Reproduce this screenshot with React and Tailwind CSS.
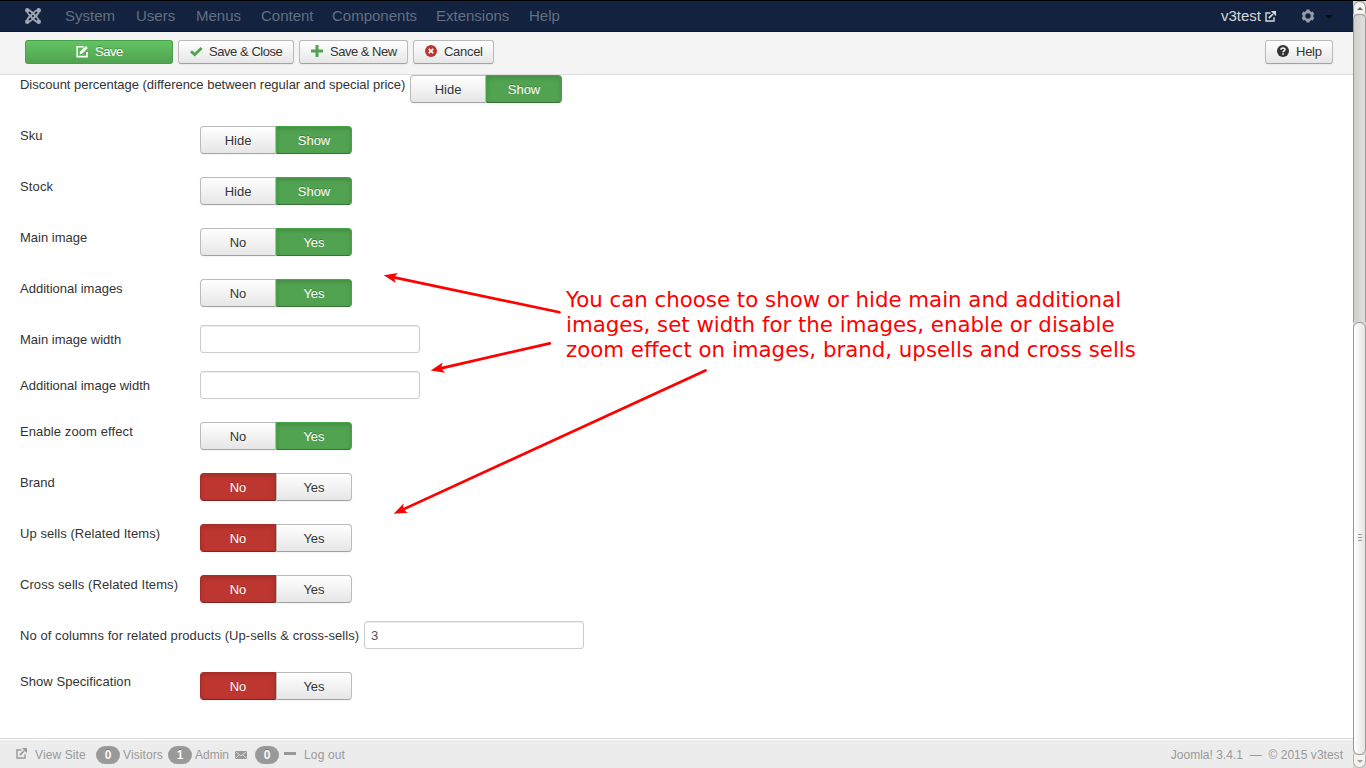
const ROWS = [
  { label: "Discount percentage (difference between regular and special price)", look: "w-[390px] tracking-[-0.015px]", type: "toggle", options: ["Hide", "Show"], active: 1 },
  { label: "Sku", type: "toggle", options: ["Hide", "Show"], active: 1 },
  { label: "Stock", look: "w-[180px] tracking-[0.15px]", type: "toggle", options: ["Hide", "Show"], active: 1 },
  { label: "Main image", type: "toggle", options: ["No", "Yes"], active: 1 },
  { label: "Additional images", type: "toggle", options: ["No", "Yes"], active: 1 },
  { label: "Main image width", type: "input", value: "" },
  { label: "Additional image width", type: "input", value: "" },
  { label: "Enable zoom effect", look: "w-[180px] tracking-[0.1px]", type: "toggle", options: ["No", "Yes"], active: 1 },
  { label: "Brand", type: "toggle", options: ["No", "Yes"], active: 0 },
  { label: "Up sells (Related Items)", look: "w-[180px] tracking-[0.06px]", type: "toggle", options: ["No", "Yes"], active: 0 },
  { label: "Cross sells (Related Items)", look: "w-[180px] tracking-[0.075px]", type: "toggle", options: ["No", "Yes"], active: 0 },
  { label: "No of columns for related products (Up-sells & cross-sells)", look: "w-[344px] tracking-[0.068px]", type: "input", value: "3" },
  { label: "Show Specification", look: "w-[180px] tracking-[0.06px]", type: "toggle", options: ["No", "Yes"], active: 0 },
];

function JoomlaIcon() {
  return (
    <svg width="16" height="16" viewBox="0 0 16 16" fill="none" className="mr-6 shrink-0 text-[#a0a7b2]">
      <g stroke="currentColor" strokeWidth="2">
        <path d="M2.500 2.500C4 2 5.200 2.500 6.300 3.600L11.600 8.900" />
        <path d="M13.500 2.500C14 4 13.500 5.200 12.400 6.300L7.100 11.600" />
        <path d="M13.500 13.500C12 14 10.800 13.500 9.700 12.400L4.400 7.100" />
        <path d="M2.500 13.500C2 12 2.500 10.800 3.600 9.700L8.900 4.400" />
      </g>
      <g stroke="currentColor" strokeWidth="1.500">
        <path d="M8.300 5C10 2.800 11.500 2 13.500 2.500M11 8.300C13.200 10 14 11.500 13.500 13.500M7.700 11C6 13.200 4.500 14 2.500 13.500M5 7.700C2.800 6 2 4.500 2.500 2.500" />
      </g>
      <g fill="currentColor">
        <circle cx="2.300" cy="2.300" r="2.300" />
        <circle cx="13.700" cy="2.300" r="2.300" />
        <circle cx="13.700" cy="13.700" r="2.300" />
        <circle cx="2.300" cy="13.700" r="2.300" />
      </g>
    </svg>
  );
}

function EditIcon() {
  return (
    <svg width="13" height="13" viewBox="0 0 13 13" fill="none" className="mb-[2px] shrink-0">
      <path d="M7.500 1.800H1.200v9.800H11V7" stroke="currentColor" strokeWidth="1.600" />
      <path d="M3.500 9.300l.5-2.600L9.800.9l2.100 2.100-5.800 5.800z" fill="currentColor" />
    </svg>
  );
}

function ExternalIcon() {
  return (
    <svg width="11" height="11" viewBox="0 0 11 11" fill="none" className="block shrink-0">
      <path d="M5.500 2H1v8h8V6.200" stroke="currentColor" strokeWidth="1.400" />
      <path d="M3.800 7.200L8 3" stroke="currentColor" strokeWidth="1.700" />
      <path d="M5.800 0H11v5.200z" fill="currentColor" />
    </svg>
  );
}

function CheckIcon() {
  return (
    <svg width="13" height="12" viewBox="0 0 13 12" className="mb-px shrink-0 text-[#51a351]">
      <path d="M0 6.200L2 4.200l2.700 2.600L10.600 1l2 2L4.700 10.400z" fill="currentColor" />
    </svg>
  );
}

function PlusIcon() {
  return (
    <svg width="12" height="12" viewBox="0 0 12 12" className="mb-[2px] shrink-0 text-[#51a351]">
      <path d="M4.500 0h3v4.500H12v3H7.500V12h-3V7.500H0v-3h4.500z" fill="currentColor" />
    </svg>
  );
}

function CancelIcon() {
  return (
    <svg width="12" height="12" viewBox="0 0 12 12" className="mb-[2px] shrink-0">
      <circle cx="6" cy="6" r="6" fill="#bd362f" />
      <path d="M3.800 3.800l4.400 4.400M8.200 3.800L3.800 8.200" stroke="#fff" strokeWidth="1.700" />
    </svg>
  );
}

function HelpIcon() {
  return (
    <svg width="12" height="12" viewBox="0 0 12 12" className="mb-[2px] shrink-0" fill="none">
      <circle cx="6" cy="6" r="6" fill="#333" />
      <path d="M3.900 4.700C4 2.400 8 2.400 8 4.500c0 1.400-2 1.300-2 2.700" stroke="#fff" strokeWidth="1.500" />
      <path d="M5.200 8.200h1.600v1.500H5.200z" fill="#fff" />
    </svg>
  );
}

function GearIcon() {
  return (
    <svg width="14" height="14" viewBox="0 0 14 14" fill="none" className="block shrink-0">
      <circle cx="7" cy="7" r="4.100" stroke="#969daa" strokeWidth="2.700" />
      <path d="M7 .5v2.100M7 11.400v2.100M1.400 3.800l1.800 1M10.800 9.200l1.800 1M1.400 10.200l1.800-1M10.800 4.800l1.800-1" stroke="#969daa" strokeWidth="3.200" />
    </svg>
  );
}

function MailIcon() {
  return (
    <svg width="12" height="8" viewBox="0 0 12 8" className="block shrink-0">
      <path d="M0 0h12v8H0z" fill="#999" />
      <path d="M.6.6L6 5 11.400.6M.6 7.500L4 3.800M11.400 7.500L8 3.800" stroke="#ececec" strokeWidth=".8" fill="none" />
    </svg>
  );
}

const BTN =
  "flex h-6 items-center rounded-[3px] border border-[#bbb] border-b-[#a2a2a2] bg-linear-to-b from-white to-[#e6e6e6] text-[13px] text-[#333] shadow-[inset_0_1px_0_rgba(255,255,255,.2),0_1px_2px_rgba(0,0,0,.05)] [text-shadow:0_1px_1px_rgba(255,255,255,.75)]";

function Header() {
  return (
    <header className="flex h-8 items-center border-t border-b border-t-black border-b-[#0b172a] bg-[#12223f] pl-[25px] text-[15px] text-[#646f80]">
      <JoomlaIcon />
      <nav className="flex flex-1">
        <span className="w-[71px]">System</span>
        <span className="w-[60px]">Users</span>
        <span className="w-[65px]">Menus</span>
        <span className="w-[71px]">Content</span>
        <span className="w-[104px]">Components</span>
        <span className="w-[93px]">Extensions</span>
        <span>Help</span>
      </nav>
      <span className="w-[44px] text-[#d9d9d9]">v3test</span>
      <span className="w-[36px] text-[#d9d9d9]"><ExternalIcon /></span>
      <span className="w-[24px]"><GearIcon /></span>
      <svg width="8" height="4" viewBox="0 0 8 4" className="mt-px mr-5"><path d="M0 0h8L4 4z" fill="#060b14" /></svg>
    </header>
  );
}

function Toolbar() {
  return (
    <div className="flex h-[43px] items-start gap-[5px] border-b border-[#dfdfdf] bg-[#f4f4f4] pt-2 pr-5 pl-[25px]">
      <button className="flex h-6 w-[148px] items-center rounded-[3px] border border-[#4aa04a] border-b-[#46a046] bg-linear-to-b from-[#62c462] to-[#51a351] pl-[50px] text-[13px] text-white [text-shadow:0_-1px_0_rgba(0,0,0,.25)]">
        <EditIcon /><span className="ml-[6px] tracking-[-0.5px]">Save</span>
      </button>
      <button className={`${BTN} w-[116px] pl-[11px]`}><CheckIcon /><span className="ml-[6px] tracking-[-0.45px]">Save &amp; Close</span></button>
      <button className={`${BTN} w-[109px] pl-[11px]`}><PlusIcon /><span className="ml-[7px] tracking-[-0.5px]">Save &amp; New</span></button>
      <button className={`${BTN} w-[81px] pl-[11px]`}><CancelIcon /><span className="ml-[7px] tracking-[-0.3px]">Cancel</span></button>
      <button className={`${BTN} ml-auto w-[68px] pl-[11px]`}><HelpIcon /><span className="ml-[7px] tracking-[-0.25px]">Help</span></button>
    </div>
  );
}

function Toggle({ options, active }) {
  const on =
    active === 1
      ? "border-[#46a546] border-b-[#387038] bg-[#51a351] text-white"
      : "border-[#a82d27] border-b-[#802420] bg-[#bd362f] text-white";
  const pressed = "shadow-[inset_0_2px_4px_rgba(0,0,0,.15),0_1px_2px_rgba(0,0,0,.05)] [text-shadow:0_-1px_0_rgba(0,0,0,.25)]";
  const off =
    "border-[#bbb] border-b-[#a2a2a2] bg-linear-to-b from-white to-[#e6e6e6] text-[#333] shadow-[0_1px_2px_rgba(0,0,0,.05)] [text-shadow:0_1px_1px_rgba(255,255,255,.75)]";
  return (
    <div className="mt-[5px] flex h-7">
      {options.map((text, i) => (
        <button
          key={text}
          className={`flex h-7 w-[76px] items-center justify-center border pt-px ${i === 0 ? "rounded-l-[4px]" : "rounded-r-[4px]"} ${i === active ? `${on} ${pressed}` : off}`}
        >
          {text}
        </button>
      ))}
    </div>
  );
}

function Row({ row }) {
  return (
    <div className="flex pb-[18px]">
      <span className={`${row.look || "w-[180px]"} h-6 shrink-0 pt-[6px] leading-[18px] whitespace-nowrap`}>{row.label}</span>
      {row.type === "toggle" ? (
        <Toggle options={row.options} active={row.active} />
      ) : (
        <input
          readOnly
          value={row.value}
          className="h-7 w-[220px] rounded-[3px] border border-[#ccc] bg-white px-[6px] pt-px text-[13px] text-[#555] shadow-[inset_0_1px_1px_rgba(0,0,0,.075)] outline-none"
        />
      )}
    </div>
  );
}

function Badge({ children }) {
  return (
    <span className="flex h-[18px] w-6 items-center justify-center rounded-full bg-[#999] text-[12px] font-bold text-white [text-shadow:0_-1px_0_rgba(0,0,0,.25)]">{children}</span>
  );
}

function Footer() {
  return (
    <footer className="flex h-[30px] items-center border-t border-[#d6d6d6] bg-[#ececec] pt-[3px] pr-[10px] pl-4 text-[12px] text-[#999] shadow-[inset_0_1px_0_#fff]">
      <span className="mb-[3px] w-[19px]"><ExternalIcon /></span>
      <span className="w-[61px] tracking-[0.1px]">View Site</span>
      <Badge>0</Badge>
      <span className="w-[48px] pl-[3px] tracking-[0.1px]">Visitors</span>
      <Badge>1</Badge>
      <span className="w-[43px] pl-[3px]">Admin</span>
      <span className="mb-px w-[20px]"><MailIcon /></span>
      <Badge>0</Badge>
      <span className="mr-2 mb-[3px] ml-[5px] h-[3px] w-3 bg-[#999]" />
      <span className="tracking-[0.15px]">Log out</span>
      <span className="ml-auto whitespace-pre tracking-[0.02px]">Joomla! 3.4.1{"  "}—{"  "}© 2015 v3test</span>
    </footer>
  );
}

function Scrollbar() {
  return (
    <div className="flex w-[13px] flex-col border-t border-black bg-[#d6d4d2]">
      <div className="flex h-[13px] items-center justify-center rounded-t-[7px] border border-b-0 border-[#9b9894] bg-[#f4f3f2]">
        <svg width="6" height="3" viewBox="0 0 6 3"><path d="M0 3h6L3 0z" fill="#6a6764" /></svg>
      </div>
      <div className="h-[308px] rounded-t-[5px] border-x border-t border-[#9b9894] bg-linear-to-r from-[#d0cecb] to-[#e2e0de]" />
      <div className="flex h-[433px] flex-col items-center justify-center gap-[2px] rounded-[6px] border border-[#9b9894] bg-linear-to-r from-white to-[#e6e4e1] pb-[2px]">
        <i className="h-px w-[4px] bg-[#999]" />
        <i className="h-px w-[4px] bg-[#999]" />
        <i className="h-px w-[4px] bg-[#999]" />
      </div>
      <div className="flex h-[13px] items-center justify-center rounded-b-[7px] border border-t-0 border-[#b5b2af] bg-[#f4f3f2]">
        <svg width="6" height="3" viewBox="0 0 6 3"><path d="M0 0h6L3 3z" fill="#a5a29f" /></svg>
      </div>
    </div>
  );
}

const ARROWS = [
  [559.500, 312.300, 383.700, 275.200],
  [549.800, 343.400, 430.700, 370.600],
  [705.500, 370.500, 393.700, 513.700],
];

function Annotation() {
  return (
    <>
      <svg width="1353" height="768" className="pointer-events-none absolute top-0 left-0">
        {ARROWS.map(([x1, y1, x2, y2]) => {
          const len = Math.hypot(x2 - x1, y2 - y1);
          const deg = (Math.atan2(y2 - y1, x2 - x1) * 180) / Math.PI;
          return (
            <g key={x1} transform={`translate(${x1} ${y1}) rotate(${deg})`} fill="#f00">
              <path d={`M0 0H${len - 8}`} stroke="#f00" strokeWidth="2.700" strokeLinecap="round" />
              <path d={`M${len} 0L${len - 13.500} -5.200Q${len - 9} 0 ${len - 13.500} 5.200z`} />
            </g>
          );
        })}
      </svg>
      <p className="absolute top-[287px] left-[566px] font-['DejaVu_Sans',sans-serif] text-[21.320px] leading-[25px] whitespace-nowrap text-[#f00]">
        You can choose to show or hide main and additional<br />
        images, set width for the images, enable or disable<br />
        zoom effect on images, brand, upsells and cross sells
      </p>
    </>
  );
}

export default function App() {
  return (
    <div className="relative flex h-[768px] w-[1366px] overflow-hidden bg-white font-['Liberation_Sans',Arial,sans-serif] text-[13px] text-[#333]">
      <div className="flex w-[1353px] flex-col">
        <Header />
        <Toolbar />
        <main className="min-h-0 flex-1 overflow-hidden pl-5">
          <div className="-mt-[5px] flex flex-col">
            {ROWS.map((row) => <Row key={row.label} row={row} />)}
          </div>
        </main>
        <Footer />
      </div>
      <Scrollbar />
      <Annotation />
    </div>
  );
}
